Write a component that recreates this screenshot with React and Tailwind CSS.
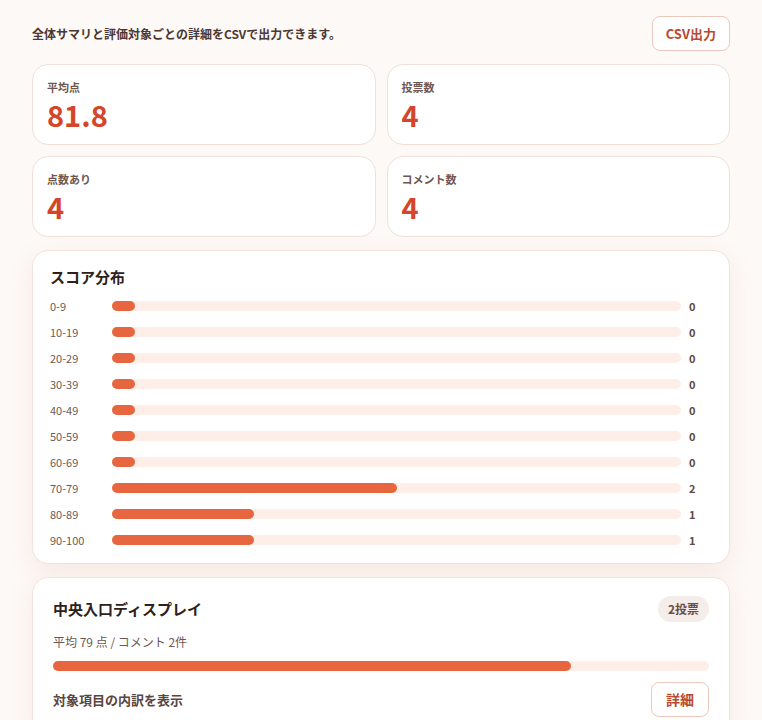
import React from "react";

const stats = [
  { label: "平均点", value: "81.8" },
  { label: "投票数", value: "4" },
  { label: "点数あり", value: "4" },
  { label: "コメント数", value: "4" },
];

const buckets = [
  { range: "0-9", count: 0 },
  { range: "10-19", count: 0 },
  { range: "20-29", count: 0 },
  { range: "30-39", count: 0 },
  { range: "40-49", count: 0 },
  { range: "50-59", count: 0 },
  { range: "60-69", count: 0 },
  { range: "70-79", count: 2 },
  { range: "80-89", count: 1 },
  { range: "90-100", count: 1 },
];

const total = 4;

const StatCard = ({ label, value }) => (
  <div className="rounded-2xl border border-[#f1e0d8] bg-white px-[14px] pt-[14px] pb-[13px]">
    <div className="text-[11px] font-bold leading-4 text-[#6e5751]">{label}</div>
    <div className="mt-[2px] text-[29px] font-bold leading-[34px] text-[#d4452a]">{value}</div>
  </div>
);

const App = () => {
  return (
    <div
      className="min-h-screen bg-[#fdf9f7] px-8 pt-4 pb-8"
      style={{ fontFamily: '"Noto Sans CJK JP", "Noto Sans", sans-serif' }}
    >
      {/* header */}
      <div className="flex items-center justify-between">
        <p className="text-[12px] font-bold text-[#4a3833]">
          全体サマリと評価対象ごとの詳細をCSVで出力できます。
        </p>
        <button className="h-[35px] rounded-lg border border-[#ecc9bc] bg-white px-[13px] text-[13px] font-bold text-[#b9482f]">
          CSV出力
        </button>
      </div>

      {/* summary */}
      <div className="mt-[13px] grid grid-cols-2 gap-[11px]">
        {stats.map((s) => (
          <StatCard key={s.label} label={s.label} value={s.value} />
        ))}
      </div>

      {/* distribution */}
      <div className="mt-[13px] rounded-2xl border border-[#f3e3dc] bg-white px-[17px] pt-[15px] pb-[15px] shadow-[0_8px_24px_rgba(214,140,110,0.14)]">
        <h2 className="text-[15px] font-bold leading-[22px] text-[#2e201c]">スコア分布</h2>
        <div className="mt-[10px] flex flex-col gap-[10px]">
          {buckets.map((b) => (
            <div key={b.range} className="flex h-4 items-center">
              <span className="w-[62px] text-[11px] text-[#6e5a54]">{b.range}</span>
              <div className="h-[10px] flex-1 rounded-full bg-[#fdeee7]">
                <div
                  className="h-full min-w-[23px] rounded-full bg-[#e8663f]"
                  style={{ width: `${(b.count / total) * 100}%` }}
                />
              </div>
              <span className="w-[31px] pl-2 text-[11px] font-bold text-[#5e4a44]">{b.count}</span>
            </div>
          ))}
        </div>
      </div>

      {/* item card */}
      <div className="mt-[13px] rounded-2xl border border-[#f3e3dc] bg-white px-5 pt-[18px] pb-5 shadow-[0_8px_24px_rgba(214,140,110,0.14)]">
        <div className="flex items-center justify-between">
          <h3 className="text-[15px] font-bold text-[#2e201c]">中央入口ディスプレイ</h3>
          <span className="flex h-[26px] items-center rounded-full bg-[#f4ede9] px-[10px] text-[12px] font-bold text-[#6b4d44]">
            2投票
          </span>
        </div>
        <p className="mt-[11px] text-[12px] leading-[18px] text-[#6e5751]">平均 79 点 / コメント 2件</p>
        <div className="mt-[10px] h-[10px] rounded-full bg-[#fdeee7]">
          <div className="h-full rounded-full bg-[#e8663f]" style={{ width: "79%" }} />
        </div>
        <div className="mt-[11px] flex items-center justify-between">
          <span className="text-[13px] font-bold text-[#5a4540]">対象項目の内訳を表示</span>
          <button className="h-[35px] rounded-lg border border-[#ecc9bc] bg-white px-[14px] text-[14px] font-bold text-[#b9482f]">
            詳細
          </button>
        </div>
      </div>
    </div>
  );
};

export default App;
